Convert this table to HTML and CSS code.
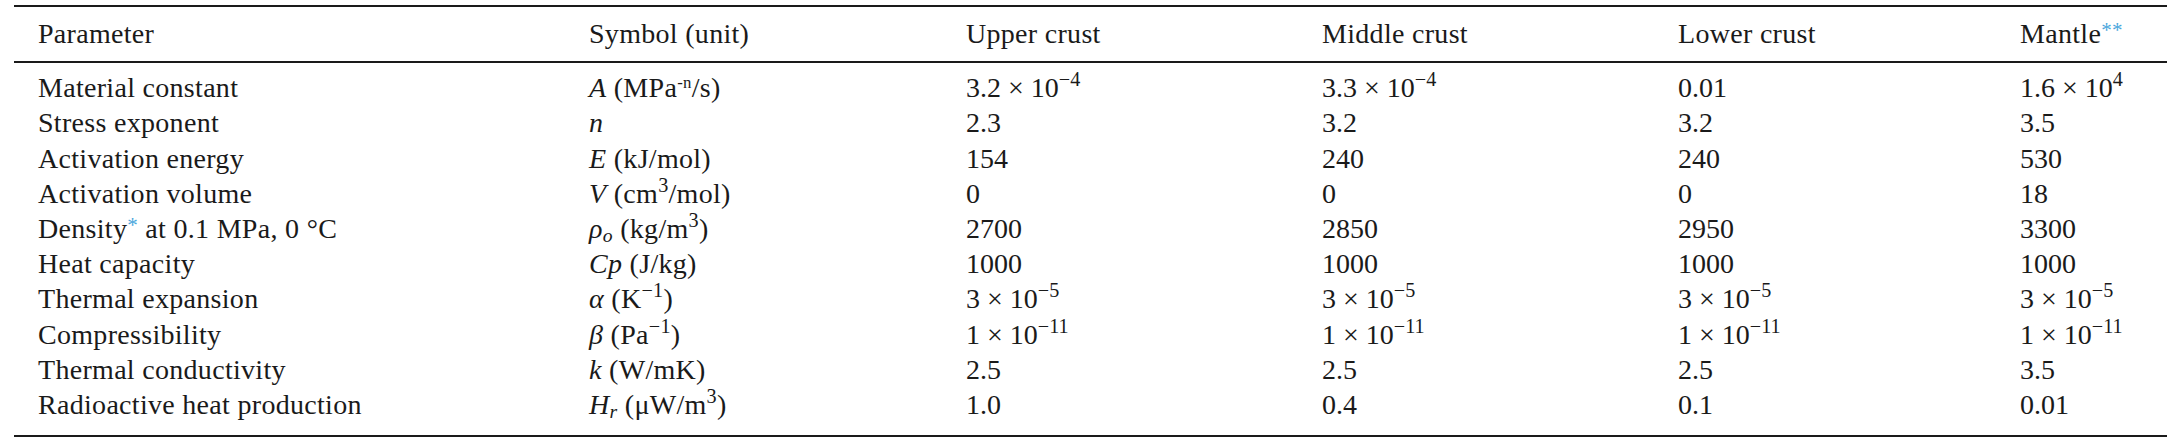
FILE: index.html
```html
<!DOCTYPE html>
<html lang="en">
<head>
<meta charset="utf-8">
<title>Parameters</title>
<link rel="stylesheet" href="styles.css">
</head>
<body>
<div class="wrap">
<table class="params">
  <colgroup>
    <col class="c1"><col class="c2"><col class="c3"><col class="c4"><col class="c5"><col class="c6">
  </colgroup>
  <thead>
    <tr>
      <th>Parameter</th>
      <th>Symbol (unit)</th>
      <th>Upper crust</th>
      <th>Middle crust</th>
      <th>Lower crust</th>
      <th>Mantle<span class="ref">**</span></th>
    </tr>
  </thead>
  <tbody>
    <tr>
      <td>Material constant</td>
      <td><i>A</i> (MPa<sup class="sup sm">-n</sup>/s)</td>
      <td class="num">3.2 × 10<sup class="sup">−4</sup></td>
      <td class="num">3.3 × 10<sup class="sup">−4</sup></td>
      <td class="num">0.01</td>
      <td class="num">1.6 × 10<sup class="sup">4</sup></td>
    </tr>
    <tr>
      <td>Stress exponent</td>
      <td><i>n</i></td>
      <td class="num">2.3</td>
      <td class="num">3.2</td>
      <td class="num">3.2</td>
      <td class="num">3.5</td>
    </tr>
    <tr>
      <td>Activation energy</td>
      <td><i>E</i> (kJ/mol)</td>
      <td class="num">154</td>
      <td class="num">240</td>
      <td class="num">240</td>
      <td class="num">530</td>
    </tr>
    <tr>
      <td>Activation volume</td>
      <td><i>V</i> (cm<sup class="sup">3</sup>/mol)</td>
      <td class="num">0</td>
      <td class="num">0</td>
      <td class="num">0</td>
      <td class="num">18</td>
    </tr>
    <tr>
      <td>Density<span class="ref">*</span> at 0.1 MPa, 0 °C</td>
      <td><i>ρ<sub class="sub">o</sub></i> (kg/m<sup class="sup">3</sup>)</td>
      <td class="num">2700</td>
      <td class="num">2850</td>
      <td class="num">2950</td>
      <td class="num">3300</td>
    </tr>
    <tr>
      <td>Heat capacity</td>
      <td><i>Cp</i> (J/kg)</td>
      <td class="num">1000</td>
      <td class="num">1000</td>
      <td class="num">1000</td>
      <td class="num">1000</td>
    </tr>
    <tr>
      <td>Thermal expansion</td>
      <td><i>α</i> (K<sup class="sup">−1</sup>)</td>
      <td class="num">3 × 10<sup class="sup">−5</sup></td>
      <td class="num">3 × 10<sup class="sup">−5</sup></td>
      <td class="num">3 × 10<sup class="sup">−5</sup></td>
      <td class="num">3 × 10<sup class="sup">−5</sup></td>
    </tr>
    <tr>
      <td>Compressibility</td>
      <td><i>β</i> (Pa<sup class="sup">−1</sup>)</td>
      <td class="num">1 × 10<sup class="sup">−11</sup></td>
      <td class="num">1 × 10<sup class="sup">−11</sup></td>
      <td class="num">1 × 10<sup class="sup">−11</sup></td>
      <td class="num">1 × 10<sup class="sup">−11</sup></td>
    </tr>
    <tr>
      <td>Thermal conductivity</td>
      <td><i>k</i> (W/mK)</td>
      <td class="num">2.5</td>
      <td class="num">2.5</td>
      <td class="num">2.5</td>
      <td class="num">3.5</td>
    </tr>
    <tr>
      <td>Radioactive heat production</td>
      <td><i>H<sub class="sub">r</sub></i> (μW/m<sup class="sup">3</sup>)</td>
      <td class="num">1.0</td>
      <td class="num">0.4</td>
      <td class="num">0.1</td>
      <td class="num">0.01</td>
    </tr>
  </tbody>
</table>
</div>
</body>
</html>
```

FILE: styles.css
```css
html, body {
  margin: 0;
  padding: 0;
  background: #ffffff;
}

.wrap {
  padding: 5px 4px 0 14px;
}

.params {
  width: 2153px;
  border-collapse: collapse;
  table-layout: fixed;
  font-family: "Liberation Serif", "Times New Roman", serif;
  font-size: 28px;
  letter-spacing: 0.3px;
  color: #1a1a1a;
  border-top: 2px solid #1a1a1a;
  border-bottom: 2px solid #1a1a1a;
}

.c1 { width: 575px; }
.c2 { width: 377px; }
.c3 { width: 356px; }
.c4 { width: 356px; }
.c5 { width: 342px; }
.c6 { width: 147px; }

.params th,
.params td {
  text-align: left;
  font-weight: normal;
  padding: 0;
  line-height: 35.2px;
  white-space: nowrap;
}

.params .num {
  letter-spacing: 0;
}

.params th:first-child,
.params td:first-child {
  padding-left: 24px;
}

.params thead th {
  padding-top: 9px;
  padding-bottom: 10px;
  border-bottom: 2px solid #1a1a1a;
}

.params tbody tr:first-child td {
  padding-top: 7px;
}

.params tbody tr:last-child td {
  padding-bottom: 13px;
}

.sup {
  font-size: 0.72em;
  vertical-align: 0.55em;
  line-height: 0;
}

.sup.sm {
  font-size: 0.6em;
}

.sub {
  font-size: 0.7em;
  vertical-align: -0.2em;
  line-height: 0;
}

.ref {
  color: #4aa6dc;
  font-size: 0.75em;
  vertical-align: 0.3em;
  line-height: 0;
}
```
